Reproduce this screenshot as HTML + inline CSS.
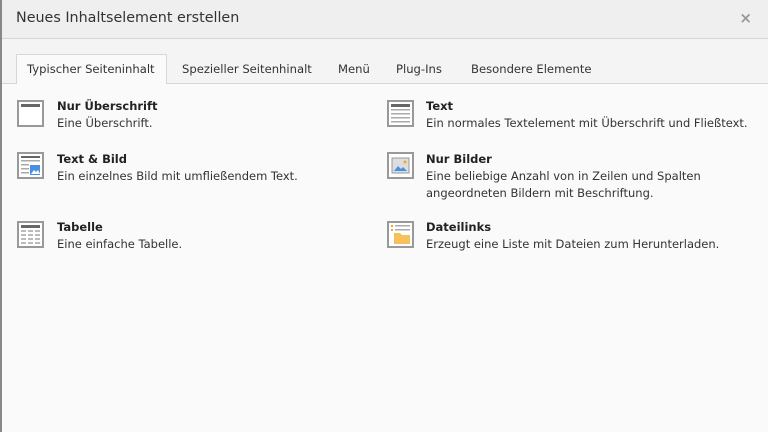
<!DOCTYPE html><html><head><style>
body{margin:0;width:768px;height:432px;overflow:hidden;background:#fafafa;font-family:"DejaVu Sans","Liberation Sans",sans-serif;color:#333;position:relative}
.lb{position:absolute;left:0;top:0;width:2px;height:432px;background:#888}
.hd{position:absolute;left:2px;top:0;right:0;height:38px;background:#efefef;border-bottom:1px solid #d7d7d7}
.hd .t{position:absolute;left:14px;top:10px;font-size:14.3px;color:#333}
.hd .x{position:absolute;right:16px;top:9px;font-size:15px;color:#999;font-weight:bold}
.tb{position:absolute;left:2px;top:39px;right:0;height:44px;background:#f4f4f4;border-bottom:1px solid #d7d7d7}
.tab{position:absolute;font-size:11.6px;color:#333}
.act{position:absolute;left:16px;top:54px;width:151px;height:30px;background:#fafafa;border:1px solid #d7d7d7;border-bottom:none;box-sizing:border-box}
.it{position:absolute;font-size:11.5px;line-height:17px}
.it b{color:#222}
svg{position:absolute}
</style></head><body>
<div class="lb"></div>
<div class="hd"><div class="t">Neues Inhaltselement erstellen</div><div class="x">×</div></div>
<div class="tb"></div>
<div class="act"></div>
<div class="tab" style="left:27px;top:62px">Typischer Seiteninhalt</div>
<div class="tab" style="left:182px;top:62px">Spezieller Seitenhinalt</div>
<div class="tab" style="left:338px;top:62px">Menü</div>
<div class="tab" style="left:396px;top:62px">Plug-Ins</div>
<div class="tab" style="left:471px;top:62px">Besondere Elemente</div>

<svg style="left:17px;top:100px" width="27" height="27"><rect x="1" y="1" width="25" height="25" fill="#fff" stroke="#999" stroke-width="2"/><rect x="4" y="4" width="19" height="3" fill="#666"/></svg>
<div class="it" style="left:57px;top:98px"><b>Nur Überschrift</b><br>Eine Überschrift.</div>

<svg style="left:387px;top:100px" width="27" height="27"><rect x="1" y="1" width="25" height="25" fill="#fff" stroke="#999" stroke-width="2"/><rect x="4" y="4" width="19" height="3" fill="#666"/><g fill="#aaa"><rect x="4" y="9" width="19" height="1.5"/><rect x="4" y="13" width="19" height="1.5"/><rect x="4" y="17" width="19" height="1.5"/><rect x="4" y="21" width="19" height="1.5"/></g></svg>
<div class="it" style="left:426px;top:98px"><b>Text</b><br>Ein normales Textelement mit Überschrift und Fließtext.</div>

<svg style="left:17px;top:152px" width="27" height="27"><rect x="1" y="1" width="25" height="25" fill="#fff" stroke="#999" stroke-width="2"/><rect x="4" y="4" width="19" height="2" fill="#666"/><g fill="#aaa"><rect x="4" y="8" width="19" height="1.5"/><rect x="4" y="12" width="8" height="1.5"/><rect x="4" y="16" width="8" height="1.5"/><rect x="4" y="20" width="8" height="1.5"/></g><rect x="13" y="13" width="10" height="10" fill="#4a90e2"/><path d="M14 22l3-4 2 2 2-2 2 4z" fill="#fff"/></svg>
<div class="it" style="left:57px;top:151px"><b>Text &amp; Bild</b><br>Ein einzelnes Bild mit umfließendem Text.</div>

<svg style="left:387px;top:152px" width="27" height="27"><rect x="1" y="1" width="25" height="25" fill="#fff" stroke="#999" stroke-width="2"/><rect x="5" y="6" width="17" height="15" fill="#ddd" stroke="#999"/><path d="M7 19l4-5 3 3 2-2 4 4z" fill="#4a90e2"/><circle cx="18" cy="10" r="1.5" fill="#f5a623"/></svg>
<div class="it" style="left:426px;top:151px"><b>Nur Bilder</b><br>Eine beliebige Anzahl von in Zeilen und Spalten<br>angeordneten Bildern mit Beschriftung.</div>

<svg style="left:17px;top:221px" width="27" height="27"><rect x="1" y="1" width="25" height="25" fill="#fff" stroke="#999" stroke-width="2"/><rect x="4" y="4" width="19" height="3" fill="#666"/><g fill="#bbb"><rect x="4" y="9" width="5" height="2"/><rect x="11" y="9" width="5" height="2"/><rect x="18" y="9" width="5" height="2"/><rect x="4" y="13" width="5" height="2"/><rect x="11" y="13" width="5" height="2"/><rect x="18" y="13" width="5" height="2"/><rect x="4" y="17" width="5" height="2"/><rect x="11" y="17" width="5" height="2"/><rect x="18" y="17" width="5" height="2"/><rect x="4" y="21" width="5" height="2"/><rect x="11" y="21" width="5" height="2"/><rect x="18" y="21" width="5" height="2"/></g></svg>
<div class="it" style="left:57px;top:219px"><b>Tabelle</b><br>Eine einfache Tabelle.</div>

<svg style="left:387px;top:221px" width="27" height="27"><rect x="1" y="1" width="25" height="25" fill="#fff" stroke="#999" stroke-width="2"/><g fill="#f5a623"><rect x="4" y="4" width="2" height="2"/><rect x="4" y="8" width="2" height="2"/></g><g fill="#aaa"><rect x="8" y="4" width="15" height="1.5"/><rect x="8" y="8" width="15" height="1.5"/></g><path d="M7 12h6l2 2h8v9H7z" fill="#f8c05a"/></svg>
<div class="it" style="left:426px;top:219px"><b>Dateilinks</b><br>Erzeugt eine Liste mit Dateien zum Herunterladen.</div>
</body></html>
